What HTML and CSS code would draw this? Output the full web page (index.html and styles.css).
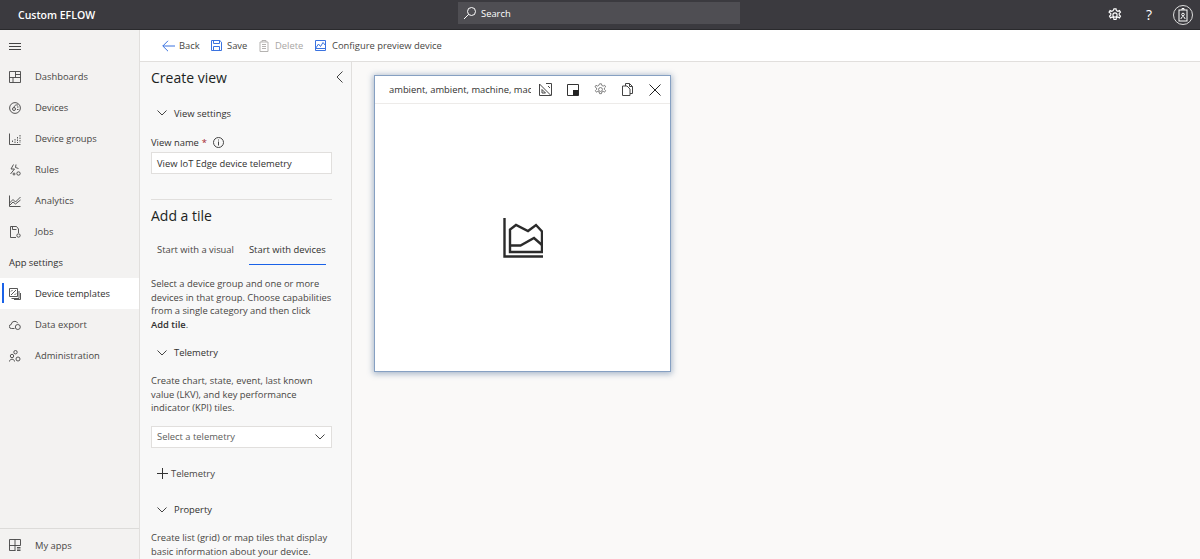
FILE: index.html
```html
<!DOCTYPE html>
<html lang="en">
<head>
    <meta charset="UTF-8">
    <title>Custom EFLOW</title>
    <link rel="stylesheet" href="styles.css">
</head>
<body>

<header class="topbar">
    <div class="brand">Custom EFLOW</div>
    <div class="search">
        <svg width="14" height="14" viewBox="0 0 14 14" fill="none" stroke="#fff" stroke-width="1"><circle cx="8.5" cy="5.5" r="4"/><path d="M5.6 8.4L1 13"/></svg>
        <span>Search</span>
    </div>
    <div class="top-actions">
        <svg class="top-gear" width="14" height="14" viewBox="0 0 16 16" fill="none" stroke="#fff" stroke-width="1.3"><circle cx="8" cy="8" r="2.4"/><path d="M6.8 1h2.4l.4 2 1.7.8 1.8-1 1.2 2-1.5 1.4v1.7l1.5 1.4-1.2 2-1.8-1-1.7.8-.4 2H6.800l-.4-2-1.700-.8-1.800 1-1.200-2 1.500-1.400V6.200L1.200 4.800l1.200-2 1.800 1 1.700-.8z"/></svg>
        <span class="help">?</span>
        <div class="avatar">
            <svg width="10" height="14" viewBox="0 0 10 14" fill="none" stroke="#fff" stroke-width="1"><rect x="1" y="2" width="8" height="11"/><path d="M4 2V.5h2V2M3 11c0-3 4-3 4 0"/><circle cx="5" cy="6.500" r="1.300"/></svg>
        </div>
    </div>
</header>

<div class="app">
    <nav class="sidebar">
        <div class="hamburger">
            <svg width="12" height="8" viewBox="0 0 12 8" stroke="#444" stroke-width="1"><path d="M0 .5h12M0 3.500h12M0 6.500h12"/></svg>
        </div>
        <a class="nav-item">
            <svg class="nav-icon" viewBox="0 0 12 12"><path d="M.5.500h11v11H.5zM6.500.500v6M.5 6.500h11M4 6.500v5M6.500 3.500h5"/></svg>
            <span>Dashboards</span>
        </a>
        <a class="nav-item">
            <svg class="nav-icon" viewBox="0 0 12 12"><circle cx="6" cy="6" r="5.400"/><circle cx="5" cy="7" r="1.500"/><path d="M5 5.500C5 3.500 7 2.500 9 3M8 5h1.500M8 7.500h1.500"/></svg>
            <span>Devices</span>
        </a>
        <a class="nav-item">
            <svg class="nav-icon" viewBox="0 0 12 12"><path d="M11 2v8M8.500 4v6M6 6v4M3.500 7.500V10" stroke-dasharray="1.500 1"/><path d="M.5.500v11h11"/></svg>
            <span>Device groups</span>
        </a>
        <a class="nav-item">
            <svg class="nav-icon" viewBox="0 0 12 12"><path d="M4.500.500L2 5h3.500L1.500 10M7 .5l-.5 3 3 1"/><circle cx="9.500" cy="9.500" r="1.700"/><circle cx="5" cy="10" r="1"/></svg>
            <span>Rules</span>
        </a>
        <a class="nav-item">
            <svg class="nav-icon" viewBox="0 0 12 12"><path d="M.5.500v11h11M.5 8L4 4.500 6.500 7 11.500 2M.5 10.500L4 7l2.500 2L11.500 5"/></svg>
            <span>Analytics</span>
        </a>
        <a class="nav-item">
            <svg class="nav-icon" viewBox="0 0 12 12"><path d="M7 11.500H1.500V.5h6l2 2.500v4M3.500.5v3h4"/><circle cx="9.500" cy="9.500" r="1.700"/></svg>
            <span>Jobs</span>
        </a>
        <div class="nav-heading">App settings</div>
        <a class="nav-item active">
            <svg class="nav-icon" viewBox="0 0 12 12"><path d="M.5.500h8v8h-8zM2 7l5-5M2 3.500L3.500 2M5.500 7L7 5.500M10 3v7.500H2.500M11.500 5v6.500H5"/></svg>
            <span>Device templates</span>
        </a>
        <a class="nav-item">
            <svg class="nav-icon" viewBox="0 0 12 12"><path d="M5.500 9.500H2.500a2 2 0 0 1-.3-4A3.500 3.500 0 0 1 8.800 4.200"/><circle cx="8.800" cy="8" r="2.500"/></svg>
            <span>Data export</span>
        </a>
        <a class="nav-item">
            <svg class="nav-icon" viewBox="0 0 12 12"><circle cx="6.500" cy="2.200" r="1.700"/><circle cx="3" cy="6" r="1.700"/><path d="M.5 11.500C.5 8.500 5.500 8.500 5.500 11.500"/><circle cx="9" cy="9" r="2"/></svg>
            <span>Administration</span>
        </a>
        <a class="nav-item my-apps">
            <svg class="nav-icon" viewBox="0 0 12 12"><path d="M6.500 11.500H.5V.5h11v6h-11M6 .5v11M8 8.500h3.500M8 10h3.500M8 11.500h3.500"/></svg>
            <span>My apps</span>
        </a>
    </nav>

    <div class="main">
        <div class="toolbar">
            <button class="tool tool-back">
                <svg width="13" height="12" viewBox="0 0 13 12" fill="none" stroke="#3b73e0" stroke-width="1"><path d="M6 .8L.8 6 6 11.200M.8 6H13"/></svg>
                Back
            </button>
            <button class="tool tool-save">
                <svg width="11" height="11" viewBox="0 0 11 11" fill="none" stroke="#3b73e0" stroke-width="1"><path d="M.5.500h8.300l1.700 1.700v8.300H.5zM2.500.5v3h6v-3M2.500 10.500V6.500h6v4"/></svg>
                Save
            </button>
            <button class="tool tool-delete">
                <svg width="10" height="12" viewBox="0 0 10 12" fill="none" stroke="#b5b3b1" stroke-width="1"><path d="M1 2h8v9.500H1zM3 2V.5h4V2M3 4.500h4M3 6.500h4M3 8.500h4"/></svg>
                Delete
            </button>
            <button class="tool tool-config">
                <svg width="11" height="11" viewBox="0 0 11 11" fill="none" stroke="#3b73e0" stroke-width="1"><path d="M.5.500h10v10H.5zM.5 8.500L3.500 4l2 2.500L8 2.500l2.500 3M.5 8.500h10"/></svg>
                Configure preview device
            </button>
        </div>

        <div class="workspace">
            <aside class="panel">
                <div class="panel-head">
                    <h2>Create view</h2>
                    <svg class="panel-collapse" width="7" height="12" viewBox="0 0 7 12" fill="none" stroke="#444" stroke-width="1"><path d="M6.500.5L1 6l5.500 5.500"/></svg>
                </div>

                <div class="section-title first">
                    <svg class="chevron" width="10" height="6" viewBox="0 0 10 6"><path d="M.5.500L5 5 9.500.5"/></svg>
                    View settings
                </div>
                <label class="field-label">View name <span class="req">*</span>
                    <svg class="info" width="11" height="11" viewBox="0 0 11 11" fill="none" stroke="#444" stroke-width="1"><circle cx="5.500" cy="5.500" r="5"/><path d="M5.500 4.500V8.500M5.500 2.500v1"/></svg>
                </label>
                <div class="input">View IoT Edge device telemetry</div>
                <hr class="divider">

                <h2 class="tile-title">Add a tile</h2>
                <div class="tabs">
                    <span class="tab">Start with a visual</span>
                    <span class="tab selected">Start with devices</span>
                </div>
                <p class="copy intro">Select a device group and one or more<br>devices in that group. Choose capabilities<br>from a single category and then click<br><b>Add tile</b>.</p>

                <div class="section-title telemetry">
                    <svg class="chevron" width="10" height="6" viewBox="0 0 10 6"><path d="M.5.500L5 5 9.500.5"/></svg>
                    Telemetry
                </div>
                <p class="copy telemetry-copy">Create chart, state, event, last known<br>value (LKV), and key performance<br>indicator (KPI) tiles.</p>
                <div class="input select">
                    <span>Select a telemetry</span>
                    <svg class="chevron" width="10" height="6" viewBox="0 0 10 6"><path d="M.5.500L5 5 9.500.5"/></svg>
                </div>
                <div class="add-row">
                    <svg width="11" height="11" viewBox="0 0 11 11" stroke="#333" stroke-width="1"><path d="M5.500 0v11M0 5.500h11"/></svg>
                    Telemetry
                </div>
                <div class="section-title property">
                    <svg class="chevron" width="10" height="6" viewBox="0 0 10 6"><path d="M.5.500L5 5 9.500.5"/></svg>
                    Property
                </div>
                <p class="copy property-copy">Create list (grid) or map tiles that display<br>basic information about your device.</p>
            </aside>

            <section class="canvas">
                <div class="tile">
                    <div class="tile-head">
                        <div class="tile-name">ambient, ambient, machine, machine</div>
                        <svg class="tile-icon" width="13" height="13" viewBox="0 0 13 13" fill="none" stroke="#444" stroke-width="1"><path d="M.5 1L12 12.500H.5zM3 10h3.500L3 6.500zM7 .5h5.500v12M9 3l2 2"/></svg>
                        <svg class="tile-icon" width="12" height="12" viewBox="0 0 12 12" fill="none" stroke="#333" stroke-width="1"><path d="M.5.500h11v11H.5z"/><rect x="6" y="6" width="5.500" height="5.500" fill="#222" stroke="none"/></svg>
                        <svg class="tile-icon" width="13" height="13" viewBox="0 0 16 16" fill="none" stroke="#666" stroke-width="1"><circle cx="8" cy="8" r="2.400"/><path d="M6.800 1h2.400l.4 2 1.700.8 1.800-1 1.200 2-1.500 1.400v1.700l1.500 1.400-1.200 2-1.800-1-1.700.8-.4 2H6.800l-.4-2-1.700-.8-1.800 1-1.200-2 1.500-1.400V6.200L1.200 4.800l1.200-2 1.800 1 1.700-.8z"/></svg>
                        <svg class="tile-icon" width="11" height="13" viewBox="0 0 11 13" fill="none" stroke="#444" stroke-width="1"><path d="M3.500 3V.5h4l3 3v7H8M.5 3h4.500l3 3v6.500H.5zM7.500.5v3h3"/></svg>
                        <svg class="tile-icon tile-close" width="12" height="12" viewBox="0 0 12 12" fill="none" stroke="#222" stroke-width="1"><path d="M.5.500l11 11M11.500.5l-11 11"/></svg>
                    </div>
                    <div class="tile-body">
                        <svg width="40" height="40" viewBox="0 0 40 40" fill="none" stroke="#2b2b2b" stroke-width="2.400"><path d="M1.500 0v38.500H40"/><path d="M7 31V11.500L13 7l12 6L33 7l6 6.500V34H7z"/><path d="M7 27.500h10.500L31 20l8 7"/></svg>
                    </div>
                </div>
            </section>
        </div>
    </div>
</div>

</body>
</html>
```

FILE: styles.css
```css
* {
    box-sizing: border-box;
}

html, body {
    height: 100%;
}

body {
    margin: 0;
    overflow: hidden;
    font-family: "Open Sans", "Noto Sans", sans-serif;
    font-size: 9.4px;
    color: #323130;
    background-color: #faf9f8;
}

.topbar {
    height: 30px;
    background-color: #3b3a3f;
    border-bottom: 1px solid #2a2a2d;
    color: #fff;
    display: flex;
    align-items: center;
    position: relative;
}

.brand {
    margin-left: 18px;
    font-size: 10.5px;
    font-weight: 600;
}

.search {
    position: absolute;
    left: 458px;
    top: 2px;
    width: 282px;
    height: 22px;
    background-color: #4f4e53;
    display: flex;
    align-items: center;
    gap: 4px;
    padding-left: 5px;
    font-size: 9.4px;
}

.top-actions {
    margin-left: auto;
    margin-right: 7px;
    display: flex;
    align-items: center;
}

.top-gear {
    margin-right: 3px;
}

.help {
    margin-left: 21px;
    font-size: 14px;
    width: 8px;
}

.avatar {
    margin-left: 19px;
    width: 20px;
    height: 20px;
    border: 1px solid #ddd;
    border-radius: 50%;
    display: flex;
    align-items: center;
    justify-content: center;
}

.app {
    display: flex;
    height: 529px;
}

.sidebar {
    width: 140px;
    background-color: #f3f2f1;
    border-right: 1px solid #e1dfdd;
    display: flex;
    flex-direction: column;
    position: relative;
}

.hamburger {
    height: 31px;
    padding: 13px 0 0 9px;
    line-height: 0;
}

.nav-item {
    height: 31px;
    display: flex;
    align-items: center;
    padding-left: 9px;
    gap: 14px;
    color: #484644;
    flex: none;
}

.nav-icon {
    width: 12px;
    height: 12px;
    fill: none;
    stroke: #444;
    stroke-width: 0.9;
    flex: none;
}

.nav-heading {
    height: 31px;
    line-height: 31px;
    padding-left: 9px;
    font-weight: 500;
    color: #323130;
}

.nav-item.active {
    background-color: #fff;
    color: #323130;
    font-weight: 500;
    position: relative;
}

.nav-item.active::before {
    content: "";
    position: absolute;
    left: 2px;
    top: 5px;
    width: 2px;
    height: 20px;
    background-color: #1a62e8;
}

.my-apps {
    margin-top: auto;
    border-top: 1px solid #dcdbd9;
    padding-top: 2px;
}

.main {
    flex: 1;
    display: flex;
    flex-direction: column;
    min-width: 0;
}

.toolbar {
    height: 32px;
    background-color: #fff;
    border-bottom: 1px solid #e1dfdd;
    display: flex;
    align-items: center;
    padding-left: 22px;
    flex: none;
}

.tool {
    border: none;
    background: none;
    padding: 0;
    display: flex;
    align-items: center;
    gap: 4px;
    font: inherit;
    color: #484644;
}

.tool-back {
    width: 49px;
}

.tool-save {
    width: 48px;
    gap: 5px;
}

.tool-delete {
    width: 56px;
    color: #a8a6a4;
    gap: 6px;
}

.tool-config {
    gap: 6px;
}

.workspace {
    flex: 1;
    display: flex;
    min-height: 0;
}

.panel {
    width: 212px;
    padding: 0 19px 0 11px;
    background-color: #f8f8f8;
    border-right: 1px solid #e1dfdd;
    overflow: hidden;
    flex: none;
}

.panel-head {
    height: 30px;
    display: flex;
    align-items: center;
    justify-content: space-between;
    margin-right: -11px;
}

.panel h2 {
    margin: 0;
    font-size: 14px;
    font-weight: 500;
    color: #201f1e;
}

.section-title {
    display: flex;
    align-items: center;
    gap: 7px;
    padding-left: 6px;
    font-weight: 500;
    height: 14px;
}

.section-title.first {
    margin-top: 14px;
}

.chevron {
    fill: none;
    stroke: #444;
    stroke-width: 1;
    flex: none;
}

.field-label {
    display: flex;
    align-items: center;
    gap: 3px;
    margin-top: 15px;
    font-weight: 500;
    height: 14px;
}

.req {
    color: #a4262c;
}

.info {
    margin-left: 3px;
}

.input {
    height: 22px;
    margin-top: 3px;
    background-color: #fff;
    border: 1px solid #e1dfdd;
    padding-left: 5px;
    display: flex;
    align-items: center;
}

.select {
    justify-content: space-between;
    padding-right: 6px;
    color: #605e5c;
    margin-top: 11px;
}

.divider {
    border: none;
    border-top: 1px solid #e1dfdd;
    margin: 25px 0 0;
}

.panel .tile-title {
    margin-top: 6px;
}

.tabs {
    display: flex;
    gap: 15px;
    margin-top: 18px;
    padding-left: 6px;
}

.tab {
    padding-bottom: 8px;
    color: #484644;
    white-space: nowrap;
}

.tab.selected {
    color: #323130;
    font-weight: 500;
    border-bottom: 1px solid #1a62e8;
}

.copy {
    margin: 0;
    line-height: 13.7px;
    color: #484644;
    white-space: nowrap;
}

.copy b {
    font-weight: 600;
    color: #323130;
}

.intro {
    margin-top: 12px;
}

.section-title.telemetry {
    margin-top: 14px;
}

.telemetry-copy {
    margin-top: 14px;
}

.add-row {
    display: flex;
    align-items: center;
    gap: 3px;
    margin: 19px 0 0 6px;
    height: 14px;
    color: #484644;
}

.section-title.property {
    margin-top: 22px;
}

.property-copy {
    margin-top: 14px;
}

.canvas {
    flex: 1;
    background-color: #faf9f8;
    padding: 14px 0 0 23px;
}

.tile {
    width: 295px;
    height: 295px;
    background-color: #fff;
    box-shadow: 0 0 0 1px #86a0c2, 0 1px 6px 2px rgba(40, 80, 130, 0.4);
    display: flex;
    flex-direction: column;
}

.tile-head {
    height: 28px;
    border-bottom: 1px solid #edebe9;
    display: flex;
    align-items: center;
    padding: 0 9px 0 14px;
    flex: none;
}

.tile-name {
    width: 143px;
    overflow: hidden;
    white-space: nowrap;
    margin-right: 8px;
    color: #323130;
}

.tile-icon {
    margin-right: 15px;
    flex: none;
}

.tile-close {
    margin: 0 0 0 1px;
}

.tile-body {
    flex: 1;
    display: flex;
    align-items: center;
    justify-content: center;
}
```
